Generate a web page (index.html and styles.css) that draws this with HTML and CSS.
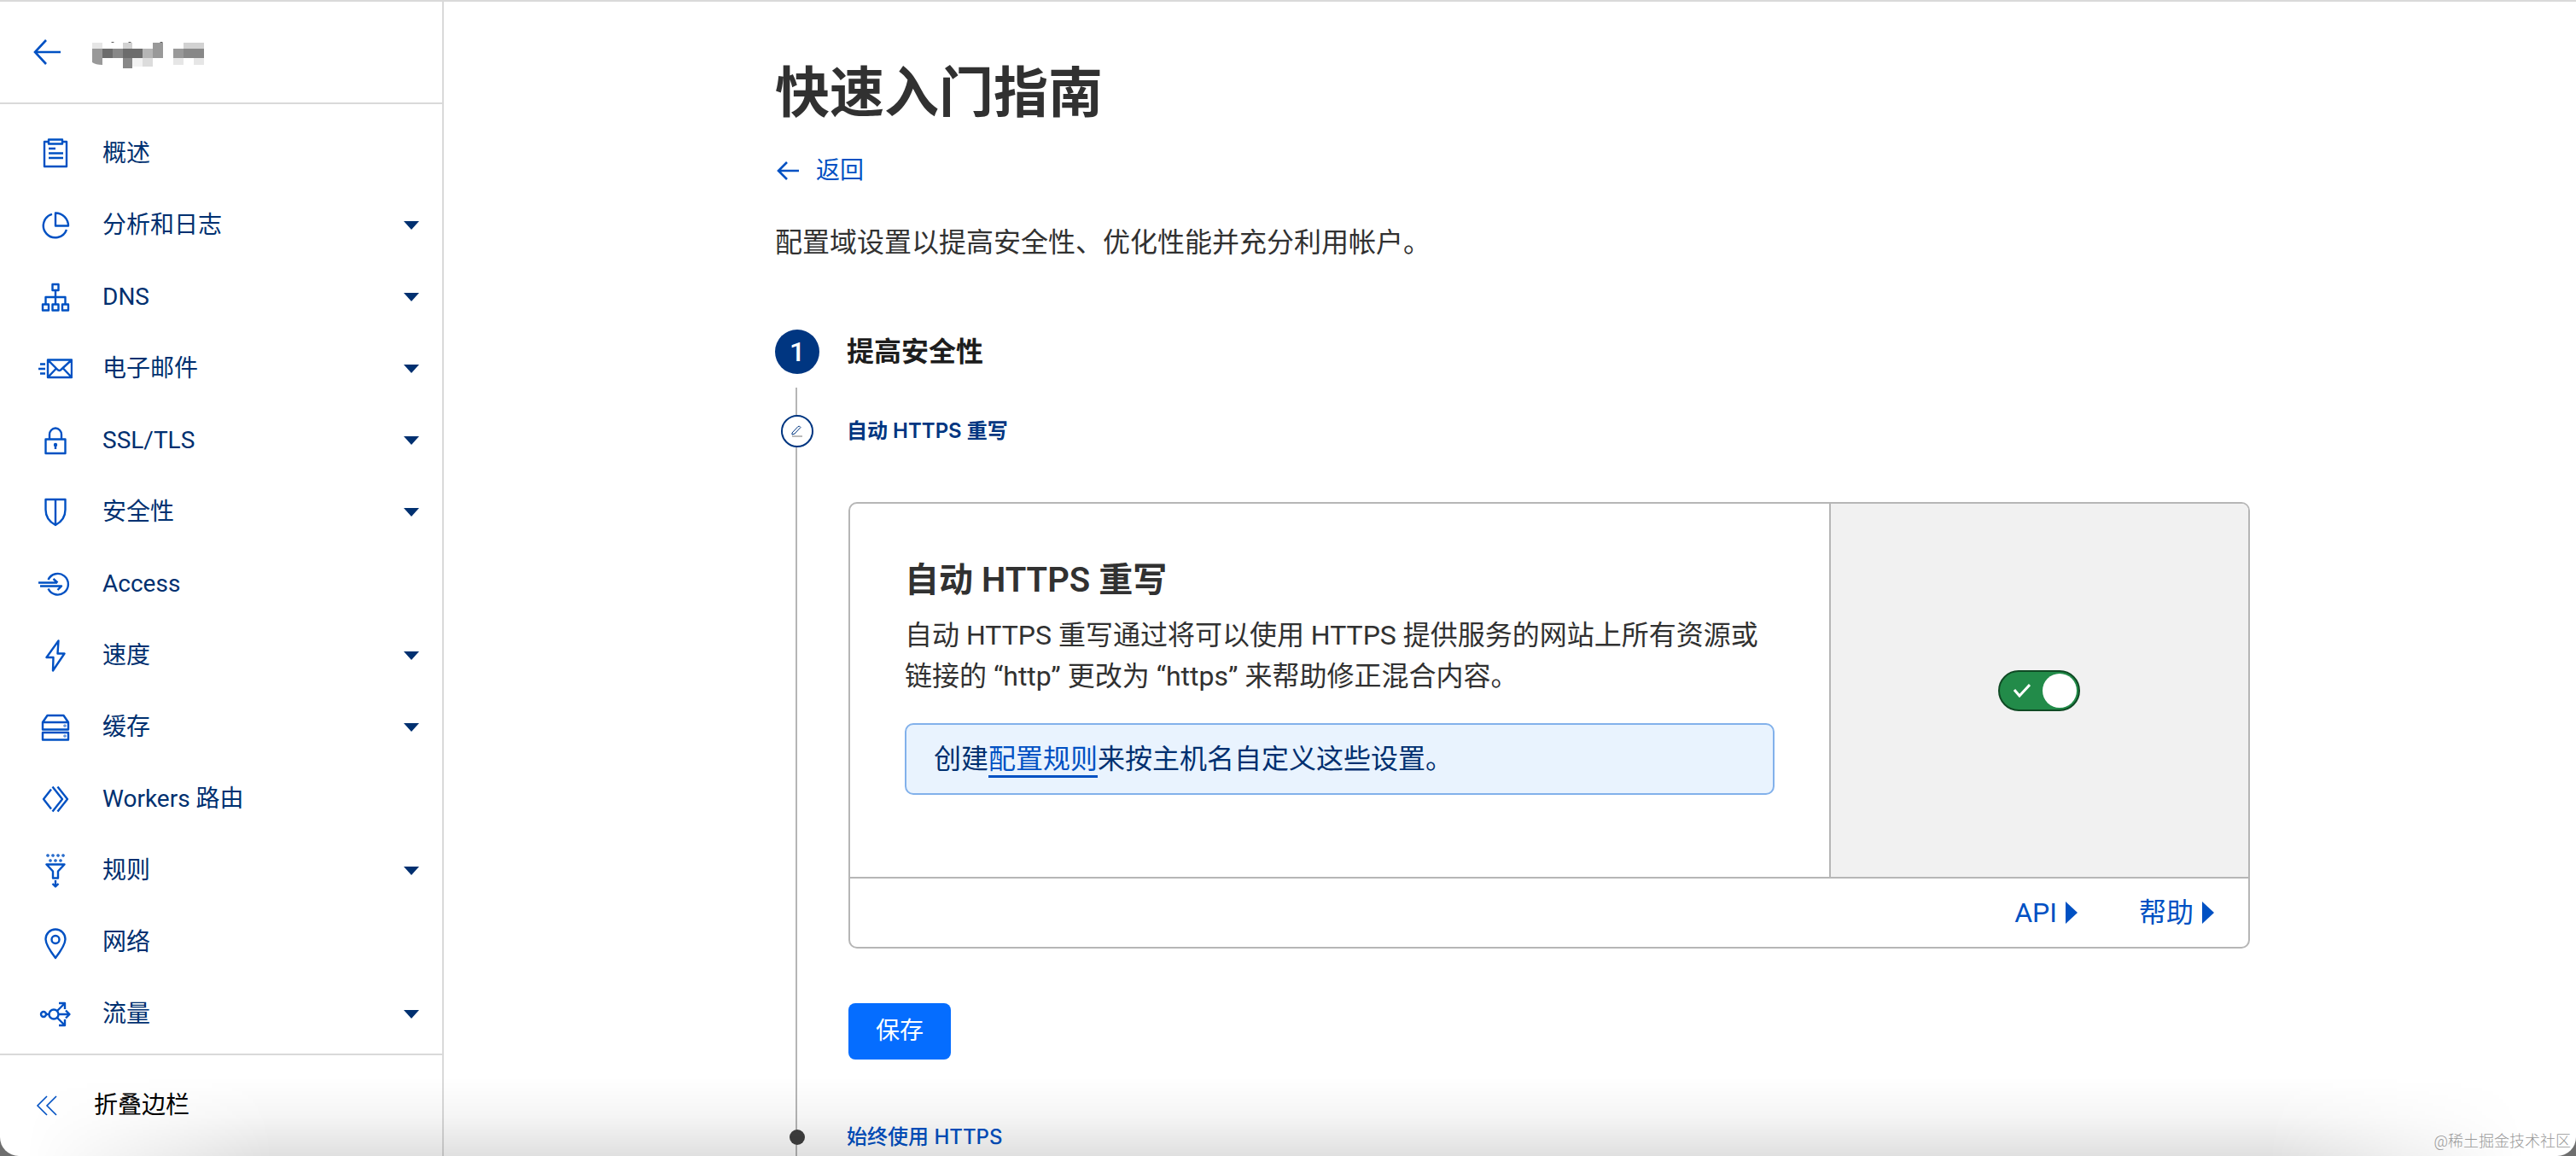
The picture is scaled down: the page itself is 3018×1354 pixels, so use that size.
FILE: index.html
```html
<!DOCTYPE html>
<html lang="zh-CN">
<head>
<meta charset="utf-8">
<meta name="viewport" content="width=device-width, initial-scale=1">
<title>快速入门指南</title>
<link rel="stylesheet" href="styles.css">
</head>
<body>
<div class="app">
  <aside class="sidebar">
    <header class="site-header">
      <a class="site-back" href="#" aria-label="后退">
        <svg class="icon-back" viewBox="0 0 32 32"><path d="M15 2 2 16l13 14M2 16h30"/></svg>
      </a>
      <svg class="site-name" viewBox="0 0 132 32" aria-hidden="true">
        <path fill="#e6e6e6" d="M0 1h12v7H0zM95 19h12v8H95zM119 19h12v8h-12z"/>
        <path fill="#d2d2d2" d="M36 1h11v7H36zM107 1h24v7h-24z"/>
        <path fill="#999" d="M0 8h12v19Q4 27 0 24zM71 1h12v18H71zM95 8h12v11H95z"/>
        <path fill="#6c6c6c" d="M12 8h12v11H12zM36 8h23v11H36z"/>
        <path fill="#888" d="M24 8h12v11H24zM36 19h11v12H36zM107 8h24v11h-24z"/>
        <path fill="#b5b5b5" d="M59 8h12v11H59z"/>
        <path fill="#f2f2f2" d="M47 19h12v10H47z"/>
        <path fill="#dcdcdc" d="M59 19h12v10H59z"/>
        <path fill="#444" d="M22 1q2-2 4 0zM42 1q2-2 4 0zM79 1q2-2 4 0z"/>
      </svg>
    </header>
    <nav class="nav">
      <a class="nav-item" href="#">
        <svg class="nav-icon" viewBox="0 0 40 40"><path d="M12 6H7v29h26V6h-5M12 3.500h16v5H12zM12 14h8M12 19.500h17M12 25h17"/></svg>
        <span>概述</span>
      </a>
      <a class="nav-item has-menu" href="#">
        <svg class="nav-icon" viewBox="0 0 40 40"><path d="M16 6.800A14 14 0 1 0 33 25M20 5.500v15h15A15 15 0 0 0 20 5.500z"/></svg>
        <span>分析和日志</span>
      </a>
      <a class="nav-item has-menu" href="#">
        <svg class="nav-icon" viewBox="0 0 40 40"><path d="M16.500 5h7v7h-7zM5 28.500h7v7H5zM16.500 28.500h7v7h-7zM28 28.500h7v7h-7zM20 12v16.500M8.500 28.500V20h23v8.500"/></svg>
        <span>DNS</span>
      </a>
      <a class="nav-item has-menu" href="#">
        <svg class="nav-icon" viewBox="0 0 40 40"><path d="M11 9.500h28v20.500H11zM11 9.500l11 11q2.500 3 5 0l12-11M11 30l9.500-10M39 30l-9.500-10M2 14.500h6M0 20h8M2 25.500h6"/></svg>
        <span>电子邮件</span>
      </a>
      <a class="nav-item has-menu" href="#">
        <svg class="nav-icon" viewBox="0 0 40 40"><path d="M8.500 18.500h23V35h-23zM13 18.500V13a7 7.500 0 0 1 14 0v5.500M20 25v5"/><circle class="solid" cx="20" cy="25" r="1"/></svg>
        <span>SSL/TLS</span>
      </a>
      <a class="nav-item has-menu" href="#">
        <svg class="nav-icon" viewBox="0 0 40 40"><path d="M8.500 5h23v12q0 12-11.500 18Q8.500 29 8.500 17zM20 5v30"/></svg>
        <span>安全性</span>
      </a>
      <a class="nav-item" href="#">
        <svg class="nav-icon" viewBox="0 0 40 40"><path d="M11.500 15a12.300 12.300 0 1 1 0 10.500M0 18.500h22M17.500 14l5 4.500M2 22.500h25l-4.500 4.500"/></svg>
        <span>Access</span>
      </a>
      <a class="nav-item has-menu" href="#">
        <svg class="nav-icon" viewBox="0 0 40 40"><path d="M23.500 2.500 9.500 22h8L17 37.500l13.500-20H22.500z"/></svg>
        <span>速度</span>
      </a>
      <a class="nav-item has-menu" href="#">
        <svg class="nav-icon" viewBox="0 0 40 40"><path d="M5 14l5.500-8h19l5.500 8v8.500H5zM5 14h30M5 26h30v8.500H5z"/><circle class="solid" cx="31" cy="18" r=".4"/><circle class="solid" cx="31" cy="30" r=".4"/></svg>
        <span>缓存</span>
      </a>
      <a class="nav-item" href="#">
        <svg class="nav-icon" viewBox="0 0 40 40"><path d="M15 8.500 6 20l9 11.500M16.500 5.500 28 20 16.500 34.500M22.500 5.500 34 20 22.500 34.500"/></svg>
        <span>Workers 路由</span>
      </a>
      <a class="nav-item has-menu" href="#">
        <svg class="nav-icon" viewBox="0 0 40 40"><path d="M9.500 12.500h21L23 20.500v8h-6v-8zM20 31v7M16.500 35l3.500 3.500 3.500-3.500"/><g class="solid"><circle cx="11" cy="2" r=".6"/><circle cx="17" cy="2" r=".6"/><circle cx="23" cy="2" r=".6"/><circle cx="29" cy="2" r=".6"/><circle cx="14" cy="8" r=".6"/><circle cx="20" cy="8" r=".6"/><circle cx="26" cy="8" r=".6"/></g></svg>
        <span>规则</span>
      </a>
      <a class="nav-item" href="#">
        <svg class="nav-icon" viewBox="0 0 40 40"><path d="M20 38Q8.500 23 8.500 16a11.500 11.500 0 0 1 23 0Q31.500 23 20 38z"/><circle cx="20" cy="16.500" r="4.500"/></svg>
        <span>网络</span>
      </a>
      <a class="nav-item has-menu" href="#">
        <svg class="nav-icon" viewBox="0 0 40 40"><circle cx="6" cy="20" r="3"/><circle cx="18" cy="20" r="5.500"/><path d="M9 20h3.500M23.500 20H36M32 15.500l4.500 4.500-4.500 4.500M22 16l8.500-8.500M24 7h7v7M22 24l8.500 8.500M24 33h7v-7"/></svg>
        <span>流量</span>
      </a>
    </nav>
    <button class="collapse" type="button">
      <svg class="icon-collapse" viewBox="0 0 26 26"><path d="M13 2 2 13l11 11M24 2 13 13l11 11"/></svg>
      <span>折叠边栏</span>
    </button>
  </aside>

  <main class="main">
    <div class="content">
      <h1 class="title">快速入门指南</h1>
      <a class="back-link" href="#">
        <svg class="icon-back-small" viewBox="0 0 28 24"><path d="M14 2 4 12l10 10M4 12h24"/></svg>
        <span>返回</span>
      </a>
      <p class="lead">配置域设置以提高安全性、优化性能并充分利用帐户。</p>

      <section class="group">
        <div class="row">
          <span class="marker"><span class="badge">1</span></span>
          <h2 class="group-title">提高安全性</h2>
        </div>
        <ol class="steps">
          <li>
            <div class="row">
              <span class="marker">
                <span class="ring"><svg class="icon-pencil" viewBox="0 0 14 14"><path d="M1 9 8 1.500q2-1 3 1L4 10 1 11z"/><path class="underline" d="M1 13h12"/></svg></span>
              </span>
              <h3 class="step-title">自动 HTTPS 重写</h3>
            </div>
            <div class="step-body">
              <div class="card">
                <div class="card-top">
                  <div class="card-text">
                    <h4 class="card-title">自动 HTTPS 重写</h4>
                    <p class="card-desc">自动 HTTPS 重写通过将可以使用 HTTPS 提供服务的网站上所有资源或链接的 “http” 更改为 “https” 来帮助修正混合内容。</p>
                    <p class="notice">创建<a class="notice-link" href="#">配置规则</a>来按主机名自定义这些设置。</p>
                  </div>
                  <div class="card-control">
                    <label class="toggle">
                      <input class="toggle-input" type="checkbox" role="switch" aria-label="自动 HTTPS 重写" checked>
                      <svg class="toggle-check" viewBox="0 0 20 16"><path d="M1 7l6 7L19 1"/></svg>
                      <span class="toggle-knob"></span>
                    </label>
                  </div>
                </div>
                <div class="card-footer">
                  <a class="card-link" href="#">API</a>
                  <a class="card-link" href="#">帮助</a>
                </div>
              </div>
              <button class="save" type="button">保存</button>
            </div>
          </li>
          <li>
            <div class="row">
              <span class="marker"><span class="dot"></span></span>
              <h3 class="step-title upcoming"><a href="#">始终使用 HTTPS</a></h3>
            </div>
          </li>
        </ol>
      </section>
    </div>
  </main>
  <div class="shade"></div>
  <span class="watermark">@稀土掘金技术社区</span>
</div>
</body>
</html>
```
FILE: styles.css
```css
* {
  box-sizing: border-box;
}

body {
  margin: 0;
  background: #6e6e6e;
  color: #313131;
  font-family: Roboto, "Noto Sans CJK SC", sans-serif;
  font-size: 32px;
  line-height: 48px;
}

h1, h2, h3, h4, p, ol {
  margin: 0;
  padding: 0;
}

ol {
  list-style: none;
}

a {
  color: #0051c3;
  text-decoration: none;
}

button {
  font: inherit;
  border: 0;
  cursor: pointer;
}

svg {
  flex: none;
  fill: none;
  stroke: #0051c3;
}

.app {
  position: relative;
  display: flex;
  height: 100vh;
  overflow: hidden;
  border-top: 2px solid #d9d9d9;
  border-radius: 0 0 22px 22px;
  background: #fff;
}

/* Sidebar */
.sidebar {
  display: flex;
  flex: none;
  flex-direction: column;
  width: 520px;
  border-right: 2px solid #d9d9d9;
}

.site-header {
  display: flex;
  flex: none;
  align-items: center;
  gap: 37px;
  height: 120px;
  padding-left: 39px;
  border-bottom: 2px solid #d9d9d9;
}

.site-back {
  display: flex;
}

.icon-back {
  width: 32px;
  height: 32px;
  stroke-width: 2.6;
}

.site-name {
  width: 132px;
  height: 32px;
  margin-top: 8px;
  stroke: none;
}

.nav {
  flex: 1;
  min-height: 0;
  padding-top: 16px;
  overflow: hidden;
}

.nav-item {
  display: flex;
  align-items: center;
  gap: 35px;
  height: 84px;
  padding: 0 27px 0 45px;
  color: #003070;
  font-size: 28px;
  line-height: 40px;
}

.nav-icon {
  width: 40px;
  height: 40px;
  stroke-width: 2.4;
  stroke-linejoin: round;
}

.solid {
  fill: #0051c3;
}

.has-menu::after {
  content: "";
  width: 18px;
  height: 10px;
  margin-left: auto;
  background: #003070;
  clip-path: polygon(0 0, 100% 0, 50% 100%);
}

.collapse {
  display: flex;
  flex: none;
  align-items: center;
  gap: 42px;
  height: 120px;
  padding: 0 42px;
  border-top: 2px solid #d9d9d9;
  background: none;
  color: #000;
  font-size: 28px;
  line-height: 40px;
}

.icon-collapse {
  width: 26px;
  height: 26px;
  stroke-width: 1.6;
}

/* Main column */
.main {
  flex: 1;
  min-width: 0;
  padding: 68px 0 0 6px;
  overflow: hidden;
}

.content {
  max-width: 1728px;
  margin: 0 auto;
}

.title {
  font-size: 64px;
  font-weight: 600;
  line-height: 80px;
}

.back-link {
  display: flex;
  align-items: center;
  gap: 20px;
  width: fit-content;
  margin-top: 30px;
  font-size: 28px;
  line-height: 40px;
}

.icon-back-small {
  width: 28px;
  height: 24px;
  stroke-width: 2.6;
}

.lead {
  margin-top: 40px;
}

.group {
  margin-top: 78px;
}

.row {
  display: flex;
  align-items: center;
  gap: 32px;
}

.marker {
  display: flex;
  flex: none;
  justify-content: center;
  width: 52px;
}

.badge {
  width: 52px;
  height: 52px;
  border-radius: 50%;
  background: #003681;
  color: #fff;
  font-weight: 500;
  line-height: 52px;
  text-align: center;
}

.group-title {
  color: #1d1d1d;
  font-size: 32px;
  font-weight: 600;
}

.steps {
  position: relative;
  margin-top: 16px;
  padding-top: 32px;
}

/* Rail that joins the step markers */
.steps::before {
  content: "";
  position: absolute;
  top: 0;
  bottom: -80px;
  left: 24px;
  width: 2px;
  background: #b6b6b6;
}

.steps .row {
  position: relative;
  height: 38px;
}

.ring {
  display: flex;
  align-items: center;
  justify-content: center;
  width: 38px;
  height: 38px;
  border: 2px solid #003681;
  border-radius: 50%;
  background: #fff;
}

.icon-pencil {
  width: 14px;
  height: 14px;
  stroke: #003681;
  stroke-width: 1;
}

.underline {
  stroke: #777;
}

.dot {
  width: 18px;
  height: 18px;
  border-radius: 50%;
  background: #404040;
}

.step-title {
  color: #003681;
  font-family: Inter, "Noto Sans CJK SC", sans-serif;
  font-size: 24px;
  font-weight: 600;
  line-height: 36px;
}

.upcoming {
  font-weight: 500;
}

.step-body {
  margin: 64px 0 72px 86px;
}

.card {
  overflow: hidden;
  border: 2px solid #b6b6b6;
  border-radius: 10px;
}

.card-top {
  display: grid;
  grid-template-columns: 7fr 3fr;
  border-bottom: 2px solid #b6b6b6;
}

.card-text {
  padding: 64px 64px 96px;
}

.card-title {
  font-size: 40px;
  font-weight: 600;
  line-height: 52px;
}

.card-desc {
  margin-top: 14px;
}

.notice {
  margin-top: 31px;
  padding: 16px 32px;
  border: 2px solid #82b1eb;
  border-radius: 10px;
  background: #e9f3fe;
  color: #003070;
}

.notice-link {
  text-decoration: underline;
  text-decoration-thickness: 3px;
  text-underline-offset: 8px;
  text-decoration-skip-ink: none;
}

.card-control {
  display: flex;
  align-items: center;
  justify-content: center;
  border-left: 2px solid #b6b6b6;
  background: #f1f1f1;
}

.toggle {
  display: flex;
  align-items: center;
  justify-content: space-between;
  width: 96px;
  height: 48px;
  padding: 0 2px 0 16px;
  border: 2px solid #0f4a24;
  border-radius: 24px;
  background: #228b49;
  cursor: pointer;
}

.toggle-input {
  position: absolute;
  opacity: 0;
}

.toggle-check {
  width: 20px;
  height: 16px;
  stroke: #fff;
  stroke-width: 3;
}

.toggle-knob {
  width: 40px;
  height: 40px;
  border-radius: 50%;
  background: #fff;
}

.card-footer {
  display: flex;
  align-items: center;
  justify-content: flex-end;
  gap: 72px;
  height: 80px;
  padding: 0 40px;
}

.card-link {
  display: flex;
  align-items: center;
  gap: 10px;
}

.card-link::after {
  content: "";
  width: 14px;
  height: 26px;
  background: #0051c3;
  clip-path: polygon(0 0, 100% 50%, 0 100%);
}

.save {
  display: block;
  height: 66px;
  margin-top: 64px;
  padding: 0 32px;
  border-radius: 8px;
  background: #056dff;
  color: #fff;
  font-size: 28px;
}

/* Soft shadow along the bottom edge of the window */
.shade {
  position: absolute;
  right: 0;
  bottom: 0;
  left: 0;
  height: 92px;
  background: linear-gradient(to bottom, rgba(0, 0, 0, 0), rgba(0, 0, 0, 0.04) 50%, rgba(0, 0, 0, 0.12));
  mask-image: linear-gradient(to right, transparent 30px, #000 320px, #000 calc(100% - 360px), transparent calc(100% - 60px));
  pointer-events: none;
}

.watermark {
  position: absolute;
  right: 6px;
  bottom: 4px;
  color: #999;
  font-size: 18px;
  font-weight: 300;
  line-height: 26px;
}
```
